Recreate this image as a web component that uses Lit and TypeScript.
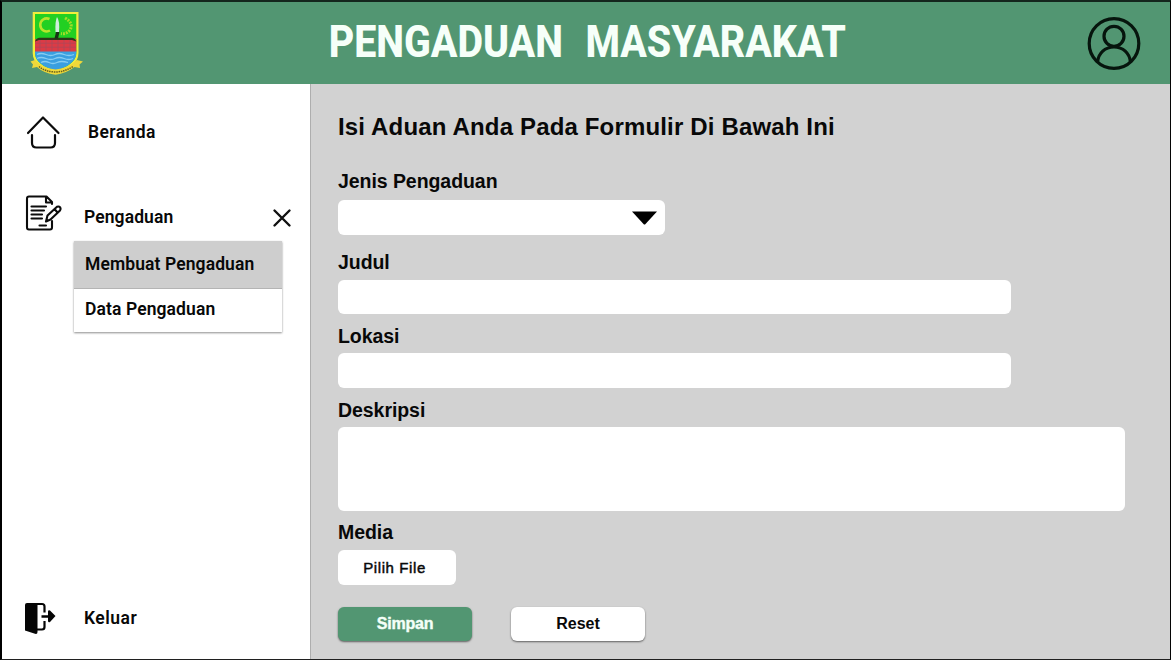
import { LitElement, html, css } from "lit";
import { customElement, state } from "lit/decorators.js";

@customElement("region-crest")
class RegionCrest extends LitElement {
  static styles = css`
    :host { display: block; width: 56px; height: 66px; }
    svg { display: block; }
  `;
  render() {
    return html`<svg width="56" height="66" viewBox="0 0 56 66">
      <path d="M5.700 2H51.500V43C51.500 53 42 60.500 28.500 63.500C15 60.500 5.700 53 5.700 43Z" fill="#f2ee3c" />
      <path d="M8 4H49.300V43C49.300 51 41 57.500 28.500 60C16 57.500 8 51 8 43Z" fill="#22d022" />
      <path d="M8 40H49.300V43C49.300 51 41 57.500 28.500 60C16 57.500 8 51 8 43Z" fill="#3a9fe0" />
      <rect x="8" y="29" width="41.300" height="12.500" fill="#dc3b45" />
      <path d="M8 33.200H49M8 37.200H49M13 29V41M19 29V41M25 29V41M31 29V41M37 29V41M43 29V41" stroke="#a84a5c" stroke-width=".7" />
      <path d="M8 31.500Q9.500 27 14 27.800H43Q48 27 49.300 31.500L45 30H12Z" fill="#2c3a18" />
      <path d="M10 44.500Q14 42.500 19 44.500T28 44.500T37 44.500T47 44.500M10 48.500Q14 46.500 19 48.500T28 48.500T37 48.500T46 48.500M14 52.500Q18 50.500 22 52.500T30 52.500T41 52.500" fill="none" stroke="#86cdf2" stroke-width="1.300" />
      <path d="M22.500 9A6.500 6.500 0 1 0 23 20.500" fill="none" stroke="#b8e42c" stroke-width="2.600" />
      <path d="M38 8Q47 13 43 20Q39.500 24.500 34 23.500" fill="none" stroke="#a4dc28" stroke-width="3" stroke-dasharray="2 1" />
      <path d="M30 7Q33 11 32 22H28.500Q28 11 30 7Z" fill="#cdeedd" />
      <path d="M29 22H32.500L31 28.500H27.500Z" fill="#173414" />
      <path d="M3.500 51.500L8 50Q16 58.500 28.500 59.500Q41 58.500 50 50L56 51.500L52.500 54.500L53 58L47.500 57Q39 63.500 28.500 64.700Q17 63.500 10 57L5 58L6 54.500Z" fill="#f0d83a" />
      <path d="M12 56.500Q18 61.800 28.500 62Q38 61.800 46 56.500" fill="none" stroke="#68601c" stroke-width="1.500" stroke-dasharray="1.500 .8" />
    </svg>`;
  }
}

@customElement("app-root")
class AppRoot extends LitElement {
  @state() private open = true;

  static styles = css`
    :host {
      display: flex; flex-direction: column; box-sizing: border-box;
      width: 1171px; height: 660px; overflow: hidden;
      border-style: solid; border-width: 2px 1px 1px 2px;
      border-color: #14261d #050505 #202020 #000;
      color: #080808; font-family: "Liberation Sans", Arial, sans-serif;
    }
    svg { display: block; flex: none; }
    button { font: inherit; color: inherit; border: 0; padding: 0; margin: 0; }
    header {
      flex: none; height: 82px; box-sizing: border-box; background: #529672;
      display: grid; grid-template-columns: 56px 1fr 56px; padding: 8px 28px 0 25px;
    }
    h1 {
      margin: 0; padding-top: 8px; text-align: center; color: #f6fff9; line-height: 50px;
      font-family: Roboto, sans-serif; font-weight: 800; font-size: 43.500px; letter-spacing: 0; word-spacing: 14px; white-space: nowrap;
    }
    .title { display: inline-block; transform: translateX(2.500px) scaleX(.905); }
    .user { padding-top: 5px; }
    .body { flex: 1; display: flex; min-height: 0; }
    nav {
      width: 309px; flex: none; box-sizing: border-box; background: #fff; border-right: 1px solid #aeaeae;
      display: flex; flex-direction: column; padding: 30px 18px 22px 22px;
      font-family: Roboto, sans-serif; font-weight: 600; font-size: 17.500px; letter-spacing: .1px; line-height: 22px;
    }
    .item { display: flex; align-items: center; height: 38px; box-sizing: border-box; }
    .item svg { margin-right: 22px; }
    .item .grow { flex: 1; }
    .home { letter-spacing: .4px; padding-bottom: 2px; }
    .complaint { margin-top: 42px; }
    .complaint .grow { padding-top: 8px; }
    .complaint .close { padding-top: 9px; }
    .close { background: none; display: block; }
    .close svg { margin: 0; }
    .sub { margin: 9px 0 0 50px; width: 208px; box-shadow: 0 1px 2px rgba(0,0,0,.45); }
    .sub div { height: 43px; display: flex; align-items: center; padding: 0 0 2px 11px; box-sizing: border-box; white-space: nowrap; }
    .sub .active { height: 47.500px; padding-bottom: 0; background: #cecece; border-bottom: 1px solid #b4b4b4; }
    .exit { margin-top: auto; }
    .exit span { letter-spacing: .5px; }
    main { flex: 1; background: #d2d2d2; padding: 29px 0 0 27px; }
    h2 { margin: 0 0 29px; font-weight: 700; font-size: 24px; line-height: 28px; letter-spacing: .16px; }
    label { display: block; font-weight: 700; font-size: 19.500px; line-height: 22px; height: 22px; letter-spacing: -.06px; }
    .field { background: #fff; border-radius: 6px; height: 34.500px; width: 672.500px; margin: 6.500px 0 10.500px; }
    .select { width: 327px; height: 35px; margin: 8px 0 16px; display: flex; align-items: center; justify-content: flex-end; box-sizing: border-box; padding-right: 7px; }
    .area { width: 787px; height: 84px; margin: 6px 0 10px; }
    .location { margin-bottom: 11px; }
    .pick { display: block; background: #fff; border-radius: 6px; width: 118px; height: 35px; margin: 7.500px 0 22px; font-size: 15px; padding-right: 5px; letter-spacing: .6px; -webkit-text-stroke: .45px currentColor; }
    .actions { display: flex; gap: 39px; }
    .btn { width: 134px; height: 33.500px; border-radius: 6px; background: #fff; font-size: 16px; font-weight: 700; letter-spacing: 0; box-shadow: 0 1px 2px rgba(0,0,0,.55); }
    .save { background: #529672; color: #f4fff8; letter-spacing: -.2px; -webkit-text-stroke: .4px currentColor; }
  `;

  private toggle() { this.open = !this.open; }

  render() {
    return html`
      <header>
        <region-crest></region-crest>
        <h1><span class="title">PENGADUAN MASYARAKAT</span></h1>
        <svg class="user" width="56" height="56" viewBox="0 0 56 56" fill="none" stroke="#06150d" stroke-width="3.200">
          <circle cx="28" cy="28.500" r="24.800" /><circle cx="28" cy="21.300" r="10" />
          <path d="M11.500 47C12.500 38 19 32 28 32S43.500 38 44.500 47" />
        </svg>
      </header>
      <div class="body">
        <nav>
          <div class="item home">
            <svg width="42" height="38" viewBox="0 0 42 38" fill="none" stroke="#0c0c0c" stroke-width="2.200" stroke-linecap="round" stroke-linejoin="round">
              <path d="M4 20L19 4.500L34.500 20M8 22V30Q8 34.500 12.500 34.500H26.500Q31 34.500 31 30V22" />
            </svg><span>Beranda</span>
          </div>
          <div class="item complaint">
            <svg width="38" height="38" viewBox="0 0 38 38" fill="none" stroke="#0c0c0c" stroke-width="2.100" stroke-linecap="round" stroke-linejoin="round">
              <path d="M28 10V8L22.500 2.500H5Q3 2.500 3 4.500V33.500Q3 35.500 5 35.500H26Q28 35.500 28 33.500V27M22 3V8.500H27.500M7.500 12.500H22M7.500 16.500H20M7.500 20.500H18M7.500 24.500H18M15.500 31.500H22" />
              <path d="M22 27.500L23.500 21.500L33 12.800Q35 12 36.200 13.500Q37 15 36 16.500L26.500 25.500ZM30.500 15L33.500 18.500" />
            </svg>
            <span class="grow">Pengaduan</span>
            <button class="close" @click=${this.toggle} aria-label="Tutup">
              <svg width="20" height="20" viewBox="0 0 20 20" stroke="#111" stroke-width="2.400" stroke-linecap="round"><path d="M2.500 2.500L17.500 17.500M17.500 2.500L2.500 17.500" /></svg>
            </button>
          </div>
          ${this.open ? html`<div class="sub"><div class="active"><span>Membuat Pengaduan</span></div><div><span>Data Pengaduan</span></div></div>` : null}
          <div class="item exit">
            <svg width="38" height="38" viewBox="0 0 38 38">
              <path d="M3 4Q1 4 1 6V31.500L11 34.800Q13.500 35.500 13.500 33V4Z" fill="#050505" />
              <path d="M12 5H18Q20.500 5 20.500 7.500V13.500M20.500 22V28Q20.500 30.500 18 30.500H12" fill="none" stroke="#050505" stroke-width="2.200" />
              <path d="M17.500 16.200H24V12.500Q24.300 10.500 26 11.500L31.500 17L26 23Q24.300 24 24 22V18.800H17.500Z" fill="#050505" />
            </svg><span>Keluar</span>
          </div>
        </nav>
        <main>
          <h2><span>Isi Aduan Anda Pada Formulir Di Bawah Ini</span></h2>
          <label><span>Jenis Pengaduan</span></label>
          <div class="field select"><svg width="27" height="16" viewBox="0 0 27 16"><path d="M1 1.500H26L14.500 14Q13.500 15 12.500 14Z" fill="#000" /></svg></div>
          <label><span>Judul</span></label><div class="field"></div>
          <label><span>Lokasi</span></label><div class="field location"></div>
          <label><span>Deskripsi</span></label><div class="field area"></div>
          <label><span>Media</span></label>
          <button class="pick">Pilih File</button>
          <div class="actions"><button class="btn save">Simpan</button><button class="btn">Reset</button></div>
        </main>
      </div>`;
  }
}
